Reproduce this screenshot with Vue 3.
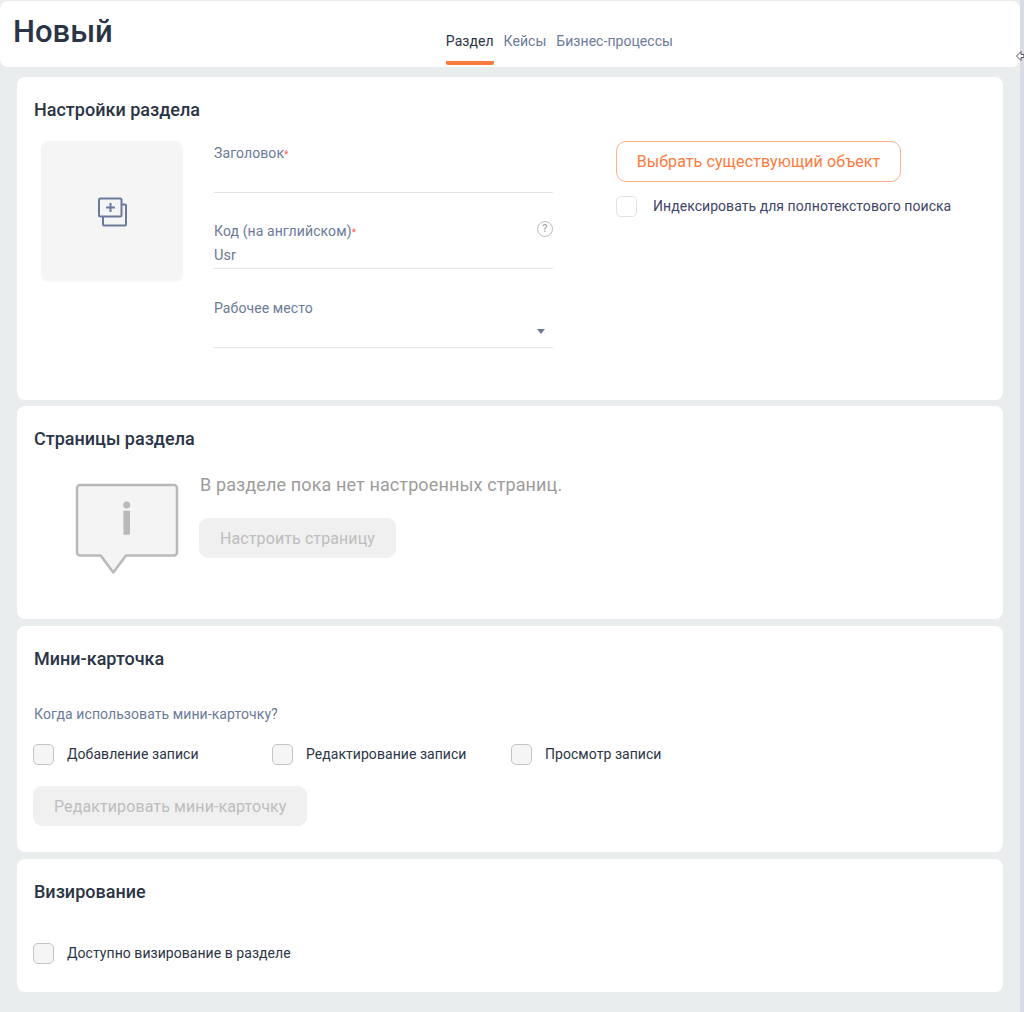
<template>
  <div class="page">
    <header class="top">
      <h1 class="top-title">Новый</h1>
      <nav class="tabs">
        <a class="tab active">Раздел</a>
        <a class="tab">Кейсы</a>
        <a class="tab">Бизнес-процессы</a>
      </nav>
    </header>

    <svg class="cursor" width="8" height="12" viewBox="0 0 8 12" fill="#fff" stroke="#555" stroke-width="1">
      <path d="M0.500 6L5 1.500V4.500H8V7.500H5V10.500z" />
    </svg>

    <main class="cards">
      <section class="card card-settings">
        <h2 class="card-title">Настройки раздела</h2>
        <div class="settings">
          <div class="logo-box">
            <svg width="32" height="32" viewBox="0 0 32 32" fill="none" stroke="#6b7a99" stroke-width="2" stroke-linejoin="round">
              <path d="M25.500 8.500H29a1 1 0 0 1 1 1v19a1 1 0 0 1-1 1H8a1 1 0 0 1-1-1v-8" />
              <rect x="3" y="2.500" width="22.500" height="18" rx="1.500" />
              <path d="M14.500 7v9M10 11.500h9" />
            </svg>
          </div>
          <div class="fields">
            <div class="field field-title">
              <label class="field-label">Заголовок<span class="req">*</span></label>
            </div>
            <div class="field field-code">
              <label class="field-label">Код (на английском)<span class="req">*</span></label>
              <span class="help">?</span>
              <span class="field-value">Usr</span>
            </div>
            <div class="field field-place">
              <label class="field-label">Рабочее место</label>
              <span class="caret"></span>
            </div>
          </div>
          <div class="side">
            <button class="btn-outline">Выбрать существующий объект</button>
            <label class="check check-index">
              <span class="box box-light"></span>
              <span>Индексировать для полнотекстового поиска</span>
            </label>
          </div>
        </div>
      </section>

      <section class="card card-pages">
        <h2 class="card-title">Страницы раздела</h2>
        <div class="empty">
          <svg class="empty-icon" width="104" height="92" viewBox="0 0 104 92">
            <path d="M5 2h94a3 3 0 0 1 3 3v64.500a3 3 0 0 1-3 3H51L38.300 89.500 25.700 72.500H5a3 3 0 0 1-3-3V5a3 3 0 0 1 3-3z" fill="#f4f4f4" stroke="#b9b9b9" stroke-width="2.500" stroke-linejoin="round" />
            <circle cx="51.700" cy="22" r="3.500" fill="#b9b9b9" />
            <rect x="48.400" y="27.700" width="6.600" height="24" fill="#b9b9b9" />
          </svg>
          <div class="empty-body">
            <p class="empty-text">В разделе пока нет настроенных страниц.</p>
            <button class="btn-disabled">Настроить страницу</button>
          </div>
        </div>
      </section>

      <section class="card card-mini">
        <h2 class="card-title">Мини-карточка</h2>
        <p class="question">Когда использовать мини-карточку?</p>
        <div class="check-row">
          <label v-for="item in miniOptions" :key="item" class="check check-mini">
            <span class="box"></span>
            <span>{{ item }}</span>
          </label>
        </div>
        <button class="btn-disabled">Редактировать мини-карточку</button>
      </section>

      <section class="card card-visa">
        <h2 class="card-title">Визирование</h2>
        <label class="check">
          <span class="box"></span>
          <span>Доступно визирование в разделе</span>
        </label>
      </section>
    </main>
  </div>
</template>

<script setup>
const miniOptions = ['Добавление записи', 'Редактирование записи', 'Просмотр записи']
</script>

<style>
html,
body {
  margin: 0;
  background: #e9edee;
}
</style>

<style scoped>
.page {
  position: relative;
  width: 1024px;
  height: 1012px;
  overflow: hidden;
  padding-top: 1px;
  box-sizing: border-box;
  font-family: Roboto, "Noto Sans", sans-serif;
  color: #2b3445;
  background: linear-gradient(to right, #e9edee 1020px, #d9dce4 1020px);
}

.cursor {
  position: absolute;
  top: 50px;
  left: 1016px;
}

.top {
  box-sizing: border-box;
  width: 1020px;
  height: 66px;
  display: flex;
  justify-content: space-between;
  padding: 0 347px 0 13px;
  background: #fff;
  border-radius: 8px;
}

.top-title {
  margin: 12px 0 0;
  font-size: 31px;
  line-height: 38px;
  font-weight: 500;
  color: #2b3445;
}

.tabs {
  display: flex;
  gap: 10px;
  align-self: flex-end;
  height: 35px;
}

.tab {
  box-sizing: border-box;
  height: 33px;
  font-size: 14px;
  line-height: 18px;
  letter-spacing: 0.05px;
  color: #6b7a99;
}

.tab.active {
  color: #2b3445;
  border-bottom: 4px solid #ff7a3c;
  border-radius: 2px;
}

.cards {
  display: flex;
  flex-direction: column;
  margin: 10px 21px 0 17px;
}

.card {
  box-sizing: border-box;
  background: #fff;
  border-radius: 8px;
  padding: 22px 17px 0 16px;
}

.card-settings {
  height: 323px;
  margin-bottom: 6px;
}

.card-pages {
  height: 213px;
  margin-bottom: 7px;
}

.card-mini {
  height: 226px;
  margin-bottom: 7px;
}

.card-visa {
  height: 133px;
}

.card-title {
  margin: 0 0 0 1px;
  font-size: 18px;
  line-height: 22px;
  font-weight: 500;
  color: #2b3445;
}

.settings {
  display: flex;
  margin-top: 20px;
}

.logo-box {
  flex: none;
  width: 142px;
  height: 141px;
  margin-left: 8px;
  display: flex;
  align-items: center;
  justify-content: center;
  background: #f5f5f5;
  border-radius: 8px;
}

.fields {
  width: 339px;
  margin-left: 31px;
}

.field {
  position: relative;
  box-sizing: border-box;
  margin-bottom: 25px;
  border-bottom: 1px solid #e6e6e6;
}

.field-title {
  height: 52px;
  padding-top: 4px;
}

.field-code {
  height: 51px;
  padding-top: 5px;
}

.field-place {
  height: 54px;
  padding-top: 6px;
}

.field-label {
  display: block;
  font-size: 14px;
  line-height: 16px;
  letter-spacing: 0.1px;
  color: #6b7a99;
}

.req {
  font-size: 10px;
  color: #ff5a4a;
}

.field-value {
  display: block;
  margin-top: 7px;
  font-size: 14.500px;
  line-height: 16px;
  letter-spacing: 0.1px;
  color: #6b7a99;
}

.help {
  position: absolute;
  top: 3px;
  right: 0;
  box-sizing: border-box;
  width: 16px;
  height: 16px;
  border: 1.500px solid #bdbdbd;
  border-radius: 50%;
  text-align: center;
  font-size: 11px;
  font-weight: 500;
  line-height: 13px;
  color: #a8a8a8;
}

.caret {
  position: absolute;
  right: 8px;
  bottom: 13px;
  border-left: 4px solid transparent;
  border-right: 4px solid transparent;
  border-top: 5px solid #6b7a99;
}

.side {
  margin-left: 63px;
}

.btn-outline {
  display: block;
  box-sizing: border-box;
  width: 285px;
  height: 41px;
  padding: 0;
  background: #fff;
  border: 1px solid #ffb28f;
  border-radius: 10px;
  font-family: inherit;
  font-size: 16px;
  letter-spacing: 0.1px;
  color: #ff7a3c;
}

.check {
  display: flex;
  align-items: center;
  gap: 13px;
  font-size: 14px;
  letter-spacing: 0.05px;
  line-height: 22px;
  color: #2b3445;
}

.check-index {
  margin-top: 13px;
  gap: 16px;
  letter-spacing: 0.05px;
  color: #3f4468;
}

.box {
  flex: none;
  box-sizing: border-box;
  width: 21px;
  height: 21px;
  background: #f5f5f5;
  border: 1px solid #c4c4c4;
  border-radius: 5px;
}

.box-light {
  background: #fff;
  border-color: #dfe1ec;
}

.empty {
  display: flex;
  margin: 33px 0 0 42px;
}

.empty-icon {
  flex: none;
}

.empty-body {
  margin-left: 20px;
  margin-top: -10px;
}

.empty-text {
  margin: 0 0 21px 1px;
  font-size: 18px;
  line-height: 24px;
  letter-spacing: 0.12px;
  color: #9c9c9c;
}

.btn-disabled {
  display: block;
  height: 40px;
  padding: 0 21px;
  background: #f0f0f0;
  border: none;
  border-radius: 9px;
  font-family: inherit;
  font-size: 16px;
  letter-spacing: 0.1px;
  color: #bdbdbd;
}

.question {
  margin: 34px 0 0 1px;
  font-size: 14px;
  line-height: 20px;
  letter-spacing: 0.08px;
  color: #6b7a99;
}

.check-row {
  display: flex;
  margin: 19px 0 21px;
}

.check-mini {
  width: 239px;
}

.card-visa .check {
  margin-top: 39px;
}
</style>
